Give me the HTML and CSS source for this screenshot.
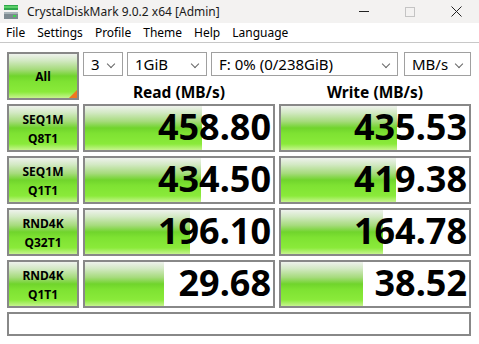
FILE: index.html
```html
<!DOCTYPE html>
<html lang="en">
<head>
    <meta charset="UTF-8">
    <meta name="viewport" content="width=device-width, initial-scale=1.0">
    <title>CrystalDiskMark 9.0.2 x64 [Admin]</title>
    <link rel="stylesheet" href="styles.css">
</head>
<body>
    <div class="titlebar">
        <svg class="app-icon" width="16" height="16" viewBox="0 0 16 16">
            <rect x="1" y="1" width="14" height="5" fill="#2fa84a"/>
            <rect x="1" y="2" width="14" height="2" fill="#5ccf6a"/>
            <rect x="1" y="8" width="14" height="7" fill="#7d8a90"/>
            <rect x="1" y="8" width="14" height="2" fill="#a8b4b8"/>
            <rect x="10" y="11" width="3" height="2" fill="#3fd24f"/>
        </svg>
        <span class="title">CrystalDiskMark 9.0.2 x64 [Admin]</span>
        <div class="win-controls">
            <span class="wc-min"></span>
            <span class="wc-max"></span>
            <svg class="wc-close" width="11" height="11" viewBox="0 0 11 11">
                <path d="M0.5 0.5 L10.5 10.5 M10.5 0.5 L0.5 10.5" stroke="#222" stroke-width="1"/>
            </svg>
        </div>
    </div>

    <div class="menubar">
        <span>File</span>
        <span>Settings</span>
        <span>Profile</span>
        <span>Theme</span>
        <span>Help</span>
        <span>Language</span>
    </div>

    <div class="main">
        <div class="grid">
            <div class="btn all">All</div>
            <div class="selects">
                <div class="select s-count">3<i class="chev"></i></div>
                <div class="select s-size">1GiB<i class="chev"></i></div>
                <div class="select s-drive">F: 0% (0/238GiB)<i class="chev"></i></div>
                <div class="select s-unit">MB/s<i class="chev"></i></div>
            </div>
            <div class="head">Read (MB/s)</div>
            <div class="head">Write (MB/s)</div>

            <div class="btn">SEQ1M<br>Q8T1</div>
            <div class="result" style="background-size: 117px 100%">458.80</div>
            <div class="result" style="background-size: 116px 100%">435.53</div>

            <div class="btn">SEQ1M<br>Q1T1</div>
            <div class="result" style="background-size: 116px 100%">434.50</div>
            <div class="result" style="background-size: 115px 100%">419.38</div>

            <div class="btn">RND4K<br>Q32T1</div>
            <div class="result" style="background-size: 105px 100%">196.10</div>
            <div class="result" style="background-size: 102px 100%">164.78</div>

            <div class="btn">RND4K<br>Q1T1</div>
            <div class="result" style="background-size: 79px 100%">29.68</div>
            <div class="result" style="background-size: 82px 100%">38.52</div>
        </div>
        <div class="status"></div>
    </div>
</body>
</html>
```

FILE: styles.css
```css
* {
    box-sizing: border-box;
}

body {
    margin: 0;
    background-color: #ffffff;
    font-family: "Noto Sans", "Open Sans", sans-serif;
    color: #000;
}

.titlebar {
    height: 23px;
    background-color: #f3f2f1;
    display: flex;
    align-items: center;
    padding-left: 3px;
}

.app-icon {
    margin-right: 8px;
}

.title {
    font-size: 12px;
    color: #1a1a1a;
}

.win-controls {
    margin-left: auto;
    display: flex;
    align-items: center;
    height: 100%;
}

.wc-min {
    width: 10px;
    height: 1px;
    background-color: #222;
    margin-right: 36px;
}

.wc-max {
    width: 10px;
    height: 10px;
    border: 1px solid #c4c4c4;
    margin-right: 36px;
}

.wc-close {
    margin-right: 17px;
}

.menubar {
    height: 20px;
    border-bottom: 1px solid #c8c8c8;
    display: flex;
    align-items: center;
    gap: 12px;
    padding-left: 6px;
    font-size: 12px;
}

.main {
    padding: 9px 8px 0 7px;
}

.grid {
    display: grid;
    grid-template-columns: 72px 192px 192px;
    grid-template-rows: 24px 20px 48px 48px 48px 48px;
    gap: 4px;
}

.btn {
    border: 2px solid #888;
    background: linear-gradient(to bottom, #eef2ec 0%, #d3e9c4 15%, #a6db7c 35%, #70d42c 50%, #7ee232 62%, #8aea3a 86%, #c6f48e 100%);
    display: flex;
    align-items: center;
    justify-content: center;
    text-align: center;
    font-weight: bold;
    font-size: 12px;
    line-height: 19px;
    padding-top: 1px;
}

.all {
    grid-row: 1 / 3;
    position: relative;
}

.all::after {
    content: "";
    position: absolute;
    right: 0;
    bottom: 0;
    border-style: solid;
    border-width: 0 0 8px 8px;
    border-color: transparent transparent #f07820 transparent;
}

.selects {
    grid-column: 2 / 4;
    display: flex;
    gap: 4px;
}

.select {
    border: 1px solid #a0a0a0;
    background-color: #fff;
    font-size: 15px;
    display: flex;
    align-items: center;
    padding-left: 7px;
    position: relative;
}

.s-count {
    width: 40px;
}

.s-size {
    width: 80px;
}

.s-drive {
    width: 187px;
    margin-right: 2px;
}

.s-unit {
    width: 67px;
}

.chev {
    position: absolute;
    right: 8px;
    top: 8px;
    width: 6px;
    height: 6px;
    border-right: 1px solid #666;
    border-bottom: 1px solid #666;
    transform: rotate(45deg);
}

.head {
    font-weight: bold;
    font-size: 15.5px;
    text-align: center;
    line-height: 20px;
    padding-top: 2px;
}

.result {
    border: 2px solid #888;
    background-color: #fff;
    background-image: linear-gradient(to bottom, #eef2ec 0%, #d3e9c4 15%, #a6db7c 35%, #70d42c 50%, #7ee232 62%, #8aea3a 86%, #c6f48e 100%);
    background-repeat: no-repeat;
    text-align: right;
    font-weight: bold;
    font-size: 36px;
    line-height: 42px;
    padding-right: 2px;
}

.status {
    margin-top: 4px;
    width: 464px;
    height: 24px;
    border: 2px solid #888;
    background-color: #fff;
}
```
